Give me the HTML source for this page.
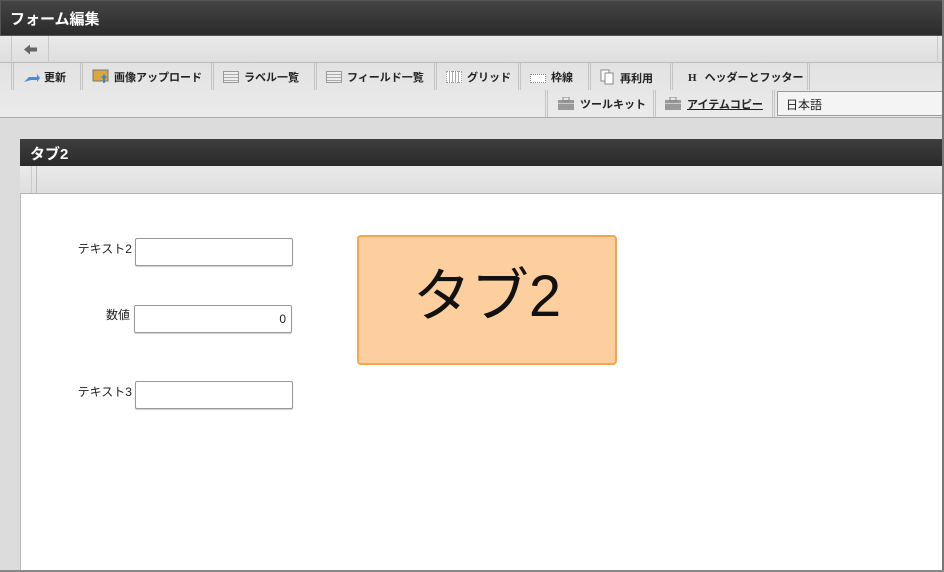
<!DOCTYPE html>
<html><head><meta charset="utf-8"><style>
*{margin:0;padding:0;box-sizing:border-box}
body{width:944px;height:572px;overflow:hidden;background:#dcdcdc;font-family:"Liberation Sans","Noto Sans CJK JP",sans-serif;position:relative;font-size:12px;color:#222}
.abs{position:absolute}
#title{left:0;top:0;width:944px;height:36px;background:linear-gradient(#444,#2b2b2b);border:1px solid #555;color:#fff;font-size:15px;font-weight:bold;padding:7px 0 0 9px}
#tb1{left:0;top:36px;width:944px;height:27px;background:linear-gradient(#eaeaea,#dedede);border-bottom:1px solid #bbb}
#back{left:11px;top:36px;width:38px;height:27px;border-left:1px solid #c8c8c8;border-right:1px solid #c8c8c8}
#tb2{left:0;top:63px;width:944px;height:55px;background:linear-gradient(#e2e2e2,#ebebeb);border-bottom:1px solid #aaa}
.btn{position:absolute;height:27px;border-left:3px double #c4c4c4;font-size:11px;font-weight:bold;color:#222;padding:6px 0 0 7px;white-space:nowrap}
.ic{display:inline-block;width:16px;height:12px;vertical-align:-2px;margin-right:5px;border:1px solid #999;background:repeating-linear-gradient(#eee 0 2px,#aaa 2px 3px)}
#panel{left:20px;top:139px;width:924px;height:433px;background:#fff;border-left:1px solid #bbb}
#ph{left:20px;top:139px;width:924px;height:27px;background:linear-gradient(#3e3e3e,#2a2a2a);color:#fff;font-weight:bold;font-size:15px;padding:4px 0 0 10px}
#ps{left:20px;top:166px;width:924px;height:28px;background:linear-gradient(#eaeaea,#dedede);border-bottom:1px solid #b5b5b5}
.lbl{position:absolute;font-size:12px;text-align:right;width:70px}
.inp{position:absolute;width:158px;height:28px;border:1px solid #999;border-radius:2px;background:#fff;box-shadow:0 1px 1px #ccc}
#big{left:357px;top:235px;width:260px;height:130px;background:#fdcf9f;border:2px solid #f7a451;border-radius:4px;font-size:58px;font-weight:normal;text-align:center;line-height:120px;color:#111}
</style></head><body>
<div id="title" class="abs">フォーム編集</div>
<div id="tb1" class="abs"></div>
<div id="back" class="abs"><svg width="38" height="27"><path d="M12 13.5l6-5v3h7v4h-7v3z" fill="#666"/></svg></div>
<div class="abs" style="left:937px;top:36px;width:7px;height:27px;border-left:1px solid #c8c8c8"></div>
<div id="tb2" class="abs"></div>
<div class="btn" style="left:11px;top:63px;padding-left:9px"><svg width="18" height="12" style="vertical-align:-2px;margin-right:3px"><path d="M1 11l5-5h8v-3l3 4-3 4v-2h-6z" fill="#4a8cd6"/></svg>更新</div>
<div class="btn" style="left:80px;top:63px;padding-left:9px"><svg width="18" height="15" style="vertical-align:-3px;margin-right:4px"><rect x="1" y="1" width="15" height="11" fill="#d9a640" stroke="#777"/><path d="M11 14v-5h-2l3-4 3 4h-2v5z" fill="#2e8ad8"/></svg>画像アップロード</div>
<div class="btn" style="left:211px;top:63px;padding-left:9px"><span class="ic"></span>ラベル一覧</div>
<div class="btn" style="left:314px;top:63px;padding-left:9px"><span class="ic"></span>フィールド一覧</div>
<div class="btn" style="left:434px;top:63px;padding-left:9px"><span class="ic" style="background:repeating-linear-gradient(90deg,#fff 0 2px,#aaa 2px 3px);border:1px dotted #999"></span>グリッド</div>
<div class="btn" style="left:518px;top:63px;padding-left:9px"><span class="ic" style="background:#fff;border:1px dotted #888;height:9px"></span>枠線</div>
<div class="btn" style="left:588px;top:63px;padding-left:9px"><svg width="16" height="16" style="vertical-align:-3px;margin-right:4px"><rect x="1" y="1" width="8" height="11" fill="#fff" stroke="#888"/><rect x="5" y="4" width="8" height="11" fill="#fff" stroke="#888"/></svg>再利用</div>
<div class="btn" style="left:670px;top:63px;width:140px;border-right:3px double #c4c4c4"><span style="font-family:'Liberation Serif',serif;margin:0 8px 0 8px">H</span>ヘッダーとフッター</div>
<div class="btn" style="left:545px;top:90px;width:109px;padding-left:10px"><svg width="16" height="13" style="vertical-align:-2px;margin-right:6px"><rect x="0" y="3" width="16" height="10" fill="#999"/><rect x="5" y="0" width="6" height="4" fill="none" stroke="#888"/><rect x="0" y="6" width="16" height="1" fill="#ccc"/></svg>ツールキット</div>
<div class="btn" style="left:653px;top:90px;padding-left:9px"><svg width="16" height="13" style="vertical-align:-2px;margin-right:6px"><rect x="0" y="3" width="16" height="10" fill="#999"/><rect x="5" y="0" width="6" height="4" fill="none" stroke="#888"/><rect x="0" y="6" width="16" height="1" fill="#ccc"/></svg><span style="text-decoration:underline">アイテムコピー</span></div>
<div class="abs" style="left:772px;top:90px;width:4px;height:27px;border-left:3px double #c4c4c4"></div>
<div class="abs" style="left:777px;top:91px;width:167px;height:25px;border:1px solid #999;border-right:none;background:#f4f4f4;font-size:12px;padding:4px 0 0 8px">日本語</div>
<div id="panel" class="abs"></div>
<div id="ph" class="abs">タブ2</div>
<div id="ps" class="abs"><div class="abs" style="left:11px;top:0;width:6px;height:27px;border-left:1px solid #ccc;border-right:1px solid #bbb"></div></div>
<div class="lbl" style="left:62px;top:240px">テキスト2</div>
<div class="inp" style="left:135px;top:238px"></div>
<div class="lbl" style="left:60px;top:306px">数値</div>
<div class="inp" style="left:134px;top:305px;text-align:right;padding:6px 5px 0 0">0</div>
<div class="lbl" style="left:62px;top:383px">テキスト3</div>
<div class="inp" style="left:135px;top:381px"></div>
<div id="big" class="abs">タブ2</div>
<div class="abs" style="left:942px;top:0;width:2px;height:572px;background:#777"></div>
<div class="abs" style="left:0;top:570px;width:944px;height:2px;background:#888"></div>
</body></html>
